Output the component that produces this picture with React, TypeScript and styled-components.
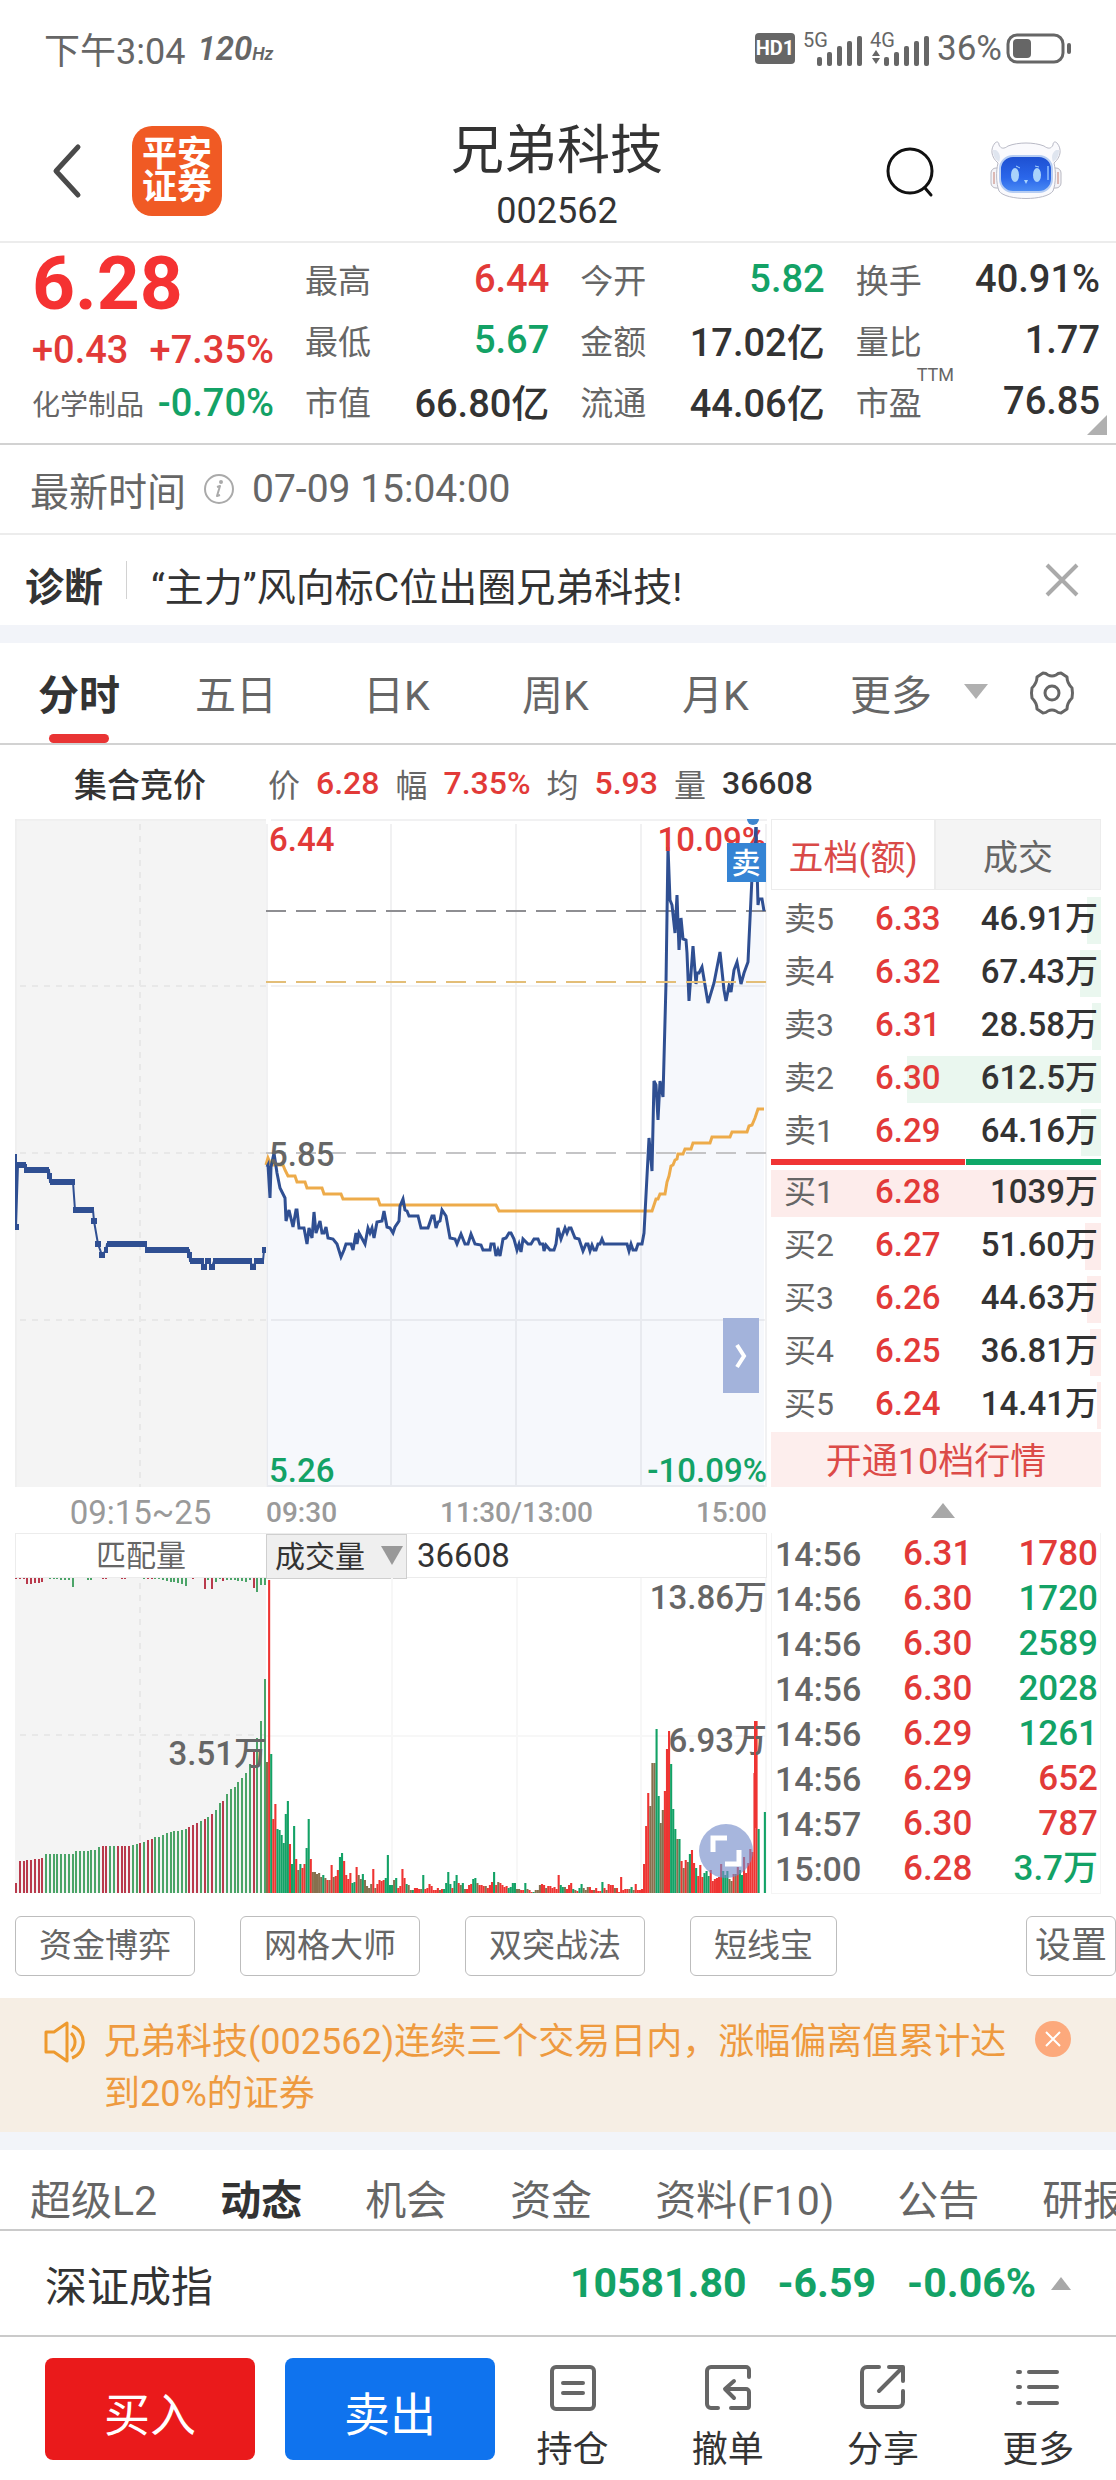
import React from "react";
import styled, { createGlobalStyle } from "styled-components";

const c = {
  red: "#e23a38",
  green: "#13a266",
  dark: "#333333",
  mid: "#666666",
  light: "#9a9a9a",
  line: "#d2d2d2",
  faint: "#ececec",
  band: "#f2f4f9",
  navy: "#2f4f92",
  amber: "#edab4a",
};

const GlobalStyle = createGlobalStyle`
  *, *::before, *::after { box-sizing: border-box; }
  body {
    margin: 0;
    background: #fff;
    color: ${c.dark};
    font-family: Roboto, "Noto Sans CJK SC", sans-serif;
  }
  button, select {
    font: inherit;
    color: inherit;
    border: 0;
    padding: 0;
    background: none;
  }
  a { color: inherit; text-decoration: none; }
  h1, p, dl, dd { margin: 0; }
  svg { display: block; overflow: visible; }
  svg text { font-family: Roboto, "Noto Sans CJK SC", sans-serif; }
`;

const Page = styled.div`
  display: flex;
  flex-direction: column;
  overflow: hidden;
`;

/* ---------- status bar ---------- */
const StatusBar = styled.div`
  display: flex;
  align-items: center;
  justify-content: space-between;
  height: 100px;
  padding: 0 45px 4px 44px;
  color: ${c.mid};
  font-size: 36px;
`;
const StatusGroup = styled.div`
  display: flex;
  align-items: center;
  gap: 8px;
`;
const Battery = styled.div`
  display: flex;
  align-items: center;
  gap: 4px;
  font-size: 35px;
`;
const Refresh = styled.span`
  margin-left: 4px;
  font-size: 33px;
  font-style: italic;
  font-weight: 600;
  small { font-size: 18px; }
`;
const HdBadge = styled.span`
  width: 40px;
  height: 31px;
  border-radius: 4px;
  background: ${c.mid};
  color: #fff;
  font-size: 20px;
  font-weight: 700;
  line-height: 31px;
  text-align: center;
`;

/* ---------- header ---------- */
const Header = styled.header`
  display: grid;
  grid-template-columns: 1fr auto 1fr;
  align-items: center;
  height: 143px;
  padding: 0 54px 0 52px;
  border-bottom: 2px solid ${c.faint};
`;
const HeaderSide = styled.div<{ $end?: boolean }>`
  display: flex;
  align-items: center;
  justify-content: ${(p) => (p.$end ? "flex-end" : "flex-start")};
  gap: ${(p) => (p.$end ? 55 : 51)}px;
`;
const Logo = styled.a`
  display: grid;
  place-content: center;
  width: 90px;
  height: 90px;
  border-radius: 20px;
  background: #f05a24;
  color: #fff;
  font-size: 35px;
  font-weight: 700;
  line-height: 33px;
  text-align: center;
`;
const Title = styled.h1`
  display: flex;
  flex-direction: column;
  align-items: center;
  padding-top: 13px;
  font-size: 53px;
  font-weight: 400;
  line-height: 68px;
  span { font-size: 36px; line-height: 52px; }
`;

/* ---------- quote summary ---------- */
const Quote = styled.section`
  position: relative;
  display: grid;
  grid-template-columns: 242px 1fr 1fr 1fr;
  column-gap: 31px;
  height: 202px;
  padding: 5px 16px 10px 32px;
  border-bottom: 2px solid ${c.line};
`;
const QuoteMain = styled.div`
  display: flex;
  flex-direction: column;
`;
const LastPrice = styled.strong`
  color: #f53232;
  font-size: 75px;
  line-height: 70px;
`;
const Change = styled.div<{ $color: string; $h: number }>`
  display: flex;
  align-items: center;
  justify-content: space-between;
  height: ${(p) => p.$h}px;
  color: ${(p) => p.$color};
  font-size: 38px;
  font-weight: 500;
  small { color: ${c.mid}; font-size: 28px; font-weight: 400; }
`;
const Stats = styled.dl`
  display: grid;
  grid-template-rows: repeat(3, 61px);
`;
const Stat = styled.div<{ $color?: string }>`
  display: flex;
  align-items: center;
  justify-content: space-between;
  dt { position: relative; color: ${c.mid}; font-size: 33px; }
  dd { color: ${(p) => p.$color ?? c.dark}; font-size: 38px; font-weight: 500; white-space: nowrap; }
  sup { position: absolute; top: -12px; left: 61px; font-size: 18px; line-height: 20px; }
`;
const Corner = styled.i`
  position: absolute;
  right: 9px;
  bottom: 8px;
  border-left: 20px solid transparent;
  border-bottom: 20px solid #b0b0b0;
`;

/* ---------- info rows ---------- */
const TimeRow = styled.section`
  display: flex;
  align-items: center;
  gap: 18px;
  height: 90px;
  padding: 0 32px 0 30px;
  border-bottom: 2px solid ${c.faint};
  color: ${c.mid};
  font-size: 39px;
`;
const Diagnosis = styled.section`
  display: flex;
  align-items: center;
  height: 90px;
  padding: 0 38px 0 25px;
  font-size: 39px;
  strong { padding: 8px 23px 0 0; }
  p { flex: 1; padding: 8px 0 0 24px; }
`;
const Rule = styled.i`
  width: 1px;
  height: 38px;
  background: ${c.line};
`;
const Band = styled.div`
  height: 18px;
  background: ${c.band};
`;

/* ---------- period tabs ---------- */
const Periods = styled.nav`
  display: grid;
  grid-template-columns: 157px 168px 159px 160px 168px 1fr auto;
  align-items: center;
  height: 102px;
  padding: 0 42px 0 38px;
  border-bottom: 2px solid ${c.line};
  color: ${c.mid};
  font-size: 41px;
`;
const Period = styled.button<{ $active?: boolean }>`
  position: relative;
  display: flex;
  align-items: center;
  gap: 32px;
  height: 100px;
  padding-bottom: 3px;
  color: ${(p) => (p.$active ? c.dark : c.mid)};
  font-weight: ${(p) => (p.$active ? 700 : 400)};
  &::after {
    content: "";
    display: ${(p) => (p.$active ? "block" : "none")};
    position: absolute;
    left: 11px;
    bottom: 0;
    width: 60px;
    height: 9px;
    border-radius: 5px;
    background: #e93434;
  }
`;
const Triangle = styled.i<{ $up?: boolean; $size: number }>`
  border: solid transparent;
  border-width: ${(p) => (p.$up ? `0 ${p.$size}px ${p.$size + 3}px` : `${p.$size + 3}px ${p.$size}px 0`)};
  border-top-color: ${(p) => (p.$up ? "transparent" : "#b0b0b0")};
  border-bottom-color: ${(p) => (p.$up ? "#a8a8a8" : "transparent")};
`;
const Readout = styled.div`
  display: flex;
  align-items: center;
  gap: 16px;
  height: 74px;
  padding: 2px 74px 0;
  color: ${c.mid};
  font-size: 32px;
  strong { margin-right: 46px; color: ${c.dark}; font-size: 33px; font-weight: 500; }
  b { color: ${c.red}; font-weight: 500; }
  b:last-child { color: ${c.dark}; }
`;

/* ---------- market area ---------- */
const Market = styled.main`
  display: grid;
  grid-template-columns: minmax(0, 1fr) 330px;
  column-gap: 4px;
  padding: 0 15px;
`;
const ChartBox = styled.div`
  position: relative;
  svg { width: 100%; height: auto; }
`;
const NextButton = styled.button`
  position: absolute;
  right: 8px;
  bottom: 94px;
  display: grid;
  place-items: center;
  width: 36px;
  height: 75px;
  background: #a3b3db;
  && svg { width: 12px; height: 24px; }
`;
const ExpandButton = styled.button`
  position: absolute;
  right: 14px;
  bottom: 15px;
  display: grid;
  place-items: center;
  width: 54px;
  height: 54px;
  border-radius: 50%;
  background: rgba(116, 139, 201, 0.63);
  && svg { width: 30px; height: 30px; }
`;
const Axis = styled.div`
  display: grid;
  grid-template-columns: 251px 1fr 1fr 1fr;
  align-items: center;
  height: 46px;
  padding-top: 4px;
  color: ${c.light};
  font-size: 28px;
  font-weight: 500;
  span:first-child { font-size: 33px; font-weight: 400; text-align: center; }
  span:nth-child(3) { text-align: center; }
  span:last-child { text-align: right; }
`;
const Book = styled.section`
  display: flex;
  flex-direction: column;
`;
const BookTabs = styled.div`
  display: grid;
  grid-template-columns: 164px 1fr;
  height: 71px;
  margin-bottom: 4px;
`;
const BookTab = styled.button<{ $active?: boolean }>`
  border: 1px solid ${c.faint};
  background: ${(p) => (p.$active ? "#fff" : "#f4f4f4")};
  color: ${(p) => (p.$active ? "#d94a48" : c.mid)};
  font-size: 35px;
`;
const Table = styled.table`
  display: block;
  tbody { display: block; }
`;
const Level = styled.tr<{ $width: string; $tint: string }>`
  display: grid;
  grid-template-columns: 91px 72px 1fr;
  align-items: center;
  height: 53px;
  padding: 0 3px 3px 13px;
  background: linear-gradient(${(p) => p.$tint}, ${(p) => p.$tint}) right center / ${(p) => p.$width} 47px no-repeat;
  font-size: 33px;
  font-weight: 500;
  th, td { padding: 0; line-height: 40px; white-space: nowrap; }
  th { color: ${c.mid}; font-size: 32px; font-weight: 400; text-align: left; }
  td { color: ${c.red}; }
  td:last-child { color: ${c.dark}; text-align: right; }
`;
const Ratio = styled.div`
  display: grid;
  grid-template-columns: 194fr 135fr;
  gap: 1px;
  height: 6px;
  margin-bottom: 2px;
  i:first-child { background: #f03434; }
  i:last-child { background: #0fa868; }
`;
const OpenDepth = styled.button`
  flex: 1;
  padding-top: 4px;
  background: #fdeeed;
  color: #dc4b48;
  font-size: 36px;
  line-height: 50px;
`;
const Collapse = styled.button`
  display: grid;
  place-items: center;
  padding-left: 14px;
`;
const VolumeHead = styled.div`
  display: grid;
  grid-template-columns: 250px 141px 1fr;
  height: 45px;
  border: 1px solid ${c.faint};
  color: ${c.mid};
  font-size: 30px;
  line-height: 43px;
  text-align: center;
  output { padding-left: 10px; color: ${c.dark}; font-size: 33px; text-align: left; }
`;
const Picker = styled.label`
  position: relative;
  border: 1px solid #cfcfcf;
  background: #efefef;
  color: ${c.dark};
  select { appearance: none; width: 100%; height: 100%; padding-left: 8px; line-height: 41px; }
  i { position: absolute; top: 11px; right: 3px; border: 11px solid transparent; border-top: 19px solid #999; border-bottom: 0; }
`;
const TradeBox = styled.section`
  border: 1px solid #f4f4f4;
  border-top: 0;
`;
const Trade = styled.tr<{ $color: string }>`
  display: grid;
  grid-template-columns: 128px 76px 1fr;
  align-items: center;
  height: 45px;
  padding: 0 2px 3px 3px;
  font-size: 35px;
  font-weight: 500;
  td { padding: 0; line-height: 42px; color: ${c.red}; }
  td:first-child { color: ${c.mid}; font-size: 34px; }
  td:last-child { color: ${(p) => p.$color}; text-align: right; }
`;

/* ---------- tools, notice, tabs ---------- */
const Tools = styled.div`
  display: flex;
  gap: 45px;
  padding: 22px 0 22px 15px;
`;
const Tool = styled.button<{ $last?: boolean }>`
  height: 60px;
  padding: 0 ${(p) => (p.$last ? 8 : 23)}px;
  margin-left: ${(p) => (p.$last ? "auto" : "0")};
  border: 1px solid #bdbdbd;
  border-radius: 6px;
  color: ${c.mid};
  font-size: ${(p) => (p.$last ? 36 : 33)}px;
  line-height: 56px;
`;
const Notice = styled.section`
  display: flex;
  align-items: flex-start;
  height: 134px;
  padding: 18px 45px 0 44px;
  background: #f6eee4;
  color: #ee9a3f;
  font-size: 36px;
  line-height: 52px;
  p { flex: 1; padding: 0 24px 0 16px; }
`;
const IconPad = styled.span`
  padding-top: 5px;
`;
const CloseDot = styled.button`
  display: grid;
  place-items: center;
  width: 36px;
  height: 36px;
  margin-top: 5px;
  border-radius: 50%;
  background: #fca97c;
`;
const Sections = styled.nav`
  display: flex;
  align-items: center;
  gap: 63px;
  height: 81px;
  padding: 22px 0 0 30px;
  border-bottom: 2px solid #cacaca;
  white-space: nowrap;
  overflow: hidden;
`;
const SectionLink = styled.a<{ $active?: boolean }>`
  color: ${(p) => (p.$active ? c.dark : c.mid)};
  font-size: 41px;
  font-weight: ${(p) => (p.$active ? 700 : 400)};
  line-height: 56px;
`;
const IndexRow = styled.section`
  display: flex;
  align-items: center;
  gap: 31px;
  height: 106px;
  padding: 0 45px;
  border-bottom: 2px solid #cacaca;
  font-size: 42px;
  span { flex: 1; }
  b { color: ${c.green}; font-size: 41px; }
  b:last-of-type { margin-right: -16px; }
`;
const ActionBar = styled.footer`
  display: grid;
  grid-template-columns: 210px 210px 1fr;
  column-gap: 30px;
  height: 144px;
  padding: 21px 0 0 45px;
`;
const TradeButton = styled.button<{ $bg: string }>`
  height: 102px;
  padding-top: 4px;
  border-radius: 8px;
  background: ${(p) => p.$bg};
  color: #fff;
  font-size: 46px;
`;
const Actions = styled.div`
  display: grid;
  grid-template-columns: repeat(4, 1fr);
  margin-left: -30px;
`;
const Action = styled.button`
  display: flex;
  flex-direction: column;
  align-items: center;
  gap: 12px;
  padding-top: 7px;
  font-size: 36px;
  line-height: 54px;
`;
const PlainButton = styled.button`
  display: grid;
  place-items: center;
`;

/* ---------- data ---------- */
const avgLine =
  "251,346 253,339 256,346 268,346 270,351 273,357 280,357 282,363 290,363 292,369 307,369 309,375 326,375 328,380 363,380 365,386 481,386 484,392 637,392 641,380 643,380 645,375 650,375 652,363 654,357 656,347 658,346 660,341 662,340 663,335 668,335 670,330 676,330 678,324 695,324 697,318 715,318 717,313 732,313 734,307 737,306 740,299 743,290 749,290";
const priceLine =
  "252,348 253,346 255,379 256,348 259,334 262,354 265,369 270,379 271,402 274,391 278,408 281,391 282,391 284,409 289,409 292,425 294,409 297,419 299,393 301,414 305,402 307,414 309,414 311,408 313,419 318,420 322,425 326,438 329,431 331,425 336,425 338,431 341,414 342,425 344,414 350,425 353,409 355,414 357,409 359,419 362,403 367,402 369,392 372,408 375,409 378,414 380,408 384,402 385,387 388,380 390,391 392,392 394,397 403,397 406,409 413,409 417,397 419,397 421,409 423,403 425,402 427,391 431,397 435,419 440,420 442,425 446,415 450,425 453,425 456,415 460,425 466,426 468,431 475,431 476,425 479,425 481,437 483,431 485,437 488,420 491,419 494,414 496,414 499,420 502,431 504,425 506,433 508,420 513,425 516,425 519,420 523,420 525,425 528,425 529,432 531,426 535,431 539,431 541,425 543,409 546,420 550,409 552,414 554,409 556,409 560,419 564,420 568,432 571,425 573,425 575,432 577,426 579,431 581,431 583,425 585,425 587,420 589,425 612,425 614,432 616,425 618,431 621,431 623,425 627,425 629,414 632,357 634,319 637,352 639,262 641,266 643,301 645,262 648,278 651,164 653,28 655,81 657,86 660,114 662,76 664,131 666,99 668,120 671,121 672,134 674,182 678,127 681,165 682,154 684,154 687,148 693,184 699,164 705,133 709,171 711,182 714,167 716,173 719,151 722,143 726,165 729,154 733,143 734,121 737,58 741,8 743,86 744,80 747,80 749,92";
const auctionLine =
  "1,335 1,408 3,346 11,346 11,351 34,351 35,363 58,363 60,391 78,391 79,402 83,425 87,436 91,431 92,425 131,425 131,431 174,431 175,442 186,442 189,448 193,442 197,448 199,442 235,442 238,448 241,442 248,442 249,431";
/* [x start, x end, y] of each plateau in the call auction */
const auctionSteps = [
  [2, 11, 346], [9, 34, 351], [32, 37, 357], [35, 60, 363], [58, 79, 391], [76, 82, 402], [80, 86, 425],
  [84, 90, 436], [89, 93, 431], [92, 132, 425], [130, 174, 431], [172, 177, 436], [175, 189, 442], [186, 192, 448],
  [190, 196, 442], [194, 200, 448], [198, 237, 442], [235, 241, 448], [239, 249, 442], [247, 251, 431], [0, 4, 408],
];

const matched = [
  10, 32, 32, 33, 33, 34, 34, 35, 39, 39, 39, 39, 39, 39, 39, 39, 42, 42, 42, 42, 43, 43, 46, 47, 47, 47, 47, 47, 47,
  47, 47, 48, 49, 50, 51, 53, 54, 56, 56, 58, 60, 61, 62, 62, 63, 64, 66, 68, 70, 72, 74, 76, 79, 83, 90, 92, 99, 104,
  106, 111, 115, 120, 129, 141, 155, 172, 214,
];
const unmatched = [
  1, 1, 1, 6, 6, 5, 5, 4, 0, 1, 1, 1, 2, 2, 2, 9, 0, 0, 0, 2, 2, 0, 0, 1, 1, 0, 0, 0, 1, 1, 0, 0, 0, 0, 1, 1, 1, 1, 1,
  2, 3, 4, 4, 5, 6, 8, 0, 1, 0, 0, 11, 2, 11, 4, 1, 3, 2, 2, 2, 3, 3, 4, 2, 10, 14, 7, 7,
];
const auctionReds = new Set([0, 1, 2, 3, 4, 5, 6, 7, 23, 24, 27, 28, 29, 30, 33, 35, 36, 46, 47, 48, 50, 52, 55, 63]);

/* one entry per minute: height plus r (up), g (down) or m (mixed) */
const minutes = (
  "131m 313r 139g 74r 89r 64g 63g 58g 50g 79g 92g 49r 29g 67g 34r 23m 29g 25r 29r 45g 74g 34r 21m 21m 19m 20m 16m 18g 15m 13r " +
  "13m 28r 16m 17r 23r 36g 40g 32r 18r 14r 20r 10g 11g 26r 18m 14m 19g 13m 7m 5m 9m 24r 5m 9r 13r 12r 13r 15g 38g 8g " +
  "8g 13m 15g 5r 7r 24r 15r 9g 8m 3m 3g 5r 5r 4r 4m 18g 4r 5r 9r 7r 3r 3r 5r 3m 4r 4g 10g 21g 9g 5r " +
  "12g 18g 10r 8m 10g 4m 4r 8r 9r 14g 15g 10m 8r 8r 7r 7m 5r 8r 11r 21g 8r 11m 10r 8r 6r 7r 5g 6g 10g 10g " +
  "4m 4m 3r 3r 10g 4m 3r 1r 1g 3m 3m 8m 9r 8r 5m 7r 7r 5r 6r 4r 18r 8g 6g 6m 4r 8r 10r 4g 3m 2r " +
  "5g 9g 5m 3m 6m 6r 3r 3m 5r 2r 2r 11g 5r 3m 9r 8r 8r 5m 5r 1r 16r 3r 4r 4r 4m 6g 3m 9r 3r 3r " +
  "4r 29r 67r 100r 87m 130m 130m 164g 97g 70m 83m 102r 144r 162r 129g 84g 64g 54m 54g 32r 25m 33r 31m 39g 43r 30r 25g 17r 28r 16r " +
  "20g 22g 17g 23r 12r 14r 15r 16r 29r 22g 18g 22g 14m 12m 19r 19m 26r 23g 18g 36r 20r 30r 44r 41r 120r 172r 64g 0g 0g 81g"
)
  .split(" ")
  .map((m) => ({ h: parseInt(m, 10), tone: m.slice(-1) as "r" | "g" | "m" }));
const tones = { r: "#ee3432", g: "#13a266", m: "#86704e" };

const sells = [
  ["卖5", "6.33", "46.91万", "14px"],
  ["卖4", "6.32", "67.43万", "21px"],
  ["卖3", "6.31", "28.58万", "9px"],
  ["卖2", "6.30", "612.5万", "194px"],
  ["卖1", "6.29", "64.16万", "20px"],
];
const buys = [
  ["买1", "6.28", "1039万", "100%"],
  ["买2", "6.27", "51.60万", "16px"],
  ["买3", "6.26", "44.63万", "14px"],
  ["买4", "6.25", "36.81万", "11px"],
  ["买5", "6.24", "14.41万", "4px"],
];
const trades: [string, string, string, boolean][] = [
  ["14:56", "6.31", "1780", true],
  ["14:56", "6.30", "1720", false],
  ["14:56", "6.30", "2589", false],
  ["14:56", "6.30", "2028", false],
  ["14:56", "6.29", "1261", false],
  ["14:56", "6.29", "652", true],
  ["14:57", "6.30", "787", true],
  ["15:00", "6.28", "3.7万", false],
];
const stats: [string, string, string?][][] = [
  [["最高", "6.44", c.red], ["最低", "5.67", c.green], ["市值", "66.80亿"]],
  [["今开", "5.82", c.green], ["金额", "17.02亿"], ["流通", "44.06亿"]],
  [["换手", "40.91%"], ["量比", "1.77"], ["市盈", "76.85"]],
];

/* ---------- drawings ---------- */
const Signal = ({ label, arrows }: { label: string; arrows?: boolean }) => (
  <svg width="59" height="36" viewBox="0 0 59 36" fill={c.mid}>
    <text x="0" y="17" fontSize="20">{label}</text>
    {arrows && <path d="M2 26l4-6 4 6zM2 28l4 6 4-6z" />}
    {[9, 14, 20, 25, 30].map((h, i) => (
      <rect key={h} x={14 + i * 10} y={36 - h} width="5" height={h} rx="2" />
    ))}
  </svg>
);

const Robot = () => (
  <svg width="72" height="60" viewBox="0 0 72 60">
    <defs>
      <linearGradient id="visor" x1="0" y1="0" x2="0" y2="1">
        <stop offset="0" stopColor="#1d4fd0" />
        <stop offset="0.6" stopColor="#2a66ea" />
        <stop offset="1" stopColor="#4b8cf4" />
      </linearGradient>
    </defs>
    <rect x="1" y="27" width="14" height="20" rx="5" fill="#f4f4f8" stroke="#b8b8c2" />
    <rect x="57" y="27" width="14" height="20" rx="5" fill="#f4f4f8" stroke="#b8b8c2" />
    <path d="M4 31v12M68 31v12" stroke="#dcb9b4" strokeWidth="2" />
    <path
      d="M8 22C1 16 0 8 5 2c2-2 4-1 4 2 2 4 5 4 9 1 10-4 26-4 36 0 4 3 7 3 9-1 0-3 2-4 4-2 5 6 4 14-3 20 2 8 2 20-1 28-7 10-47 10-54 0-3-8-3-20-1-28z"
      fill="#fafafd"
      stroke="#b9bac6"
    />
    <path d="M3 9c0 6 2 9 6 12 2-5 1-9-3-12zM69 9c0 6-2 9-6 12-2-5-1-9 3-12z" fill="#dfe5ef" />
    <rect x="10" y="15" width="52" height="36" rx="13" fill="url(#visor)" stroke="#b6cdf3" strokeWidth="2" />
    <ellipse cx="25" cy="34" rx="4" ry="7" fill="#a9d3fb" />
    <ellipse cx="47" cy="34" rx="4" ry="7" fill="#a9d3fb" />
    <path d="M26 25l4 2M45 25l4 1" stroke="#a9d3fb" strokeWidth="1" />
    <path d="M34 39h4l-2 4z" fill="#a9d3fb" />
    <path d="M58 25v14" stroke="#74a6f7" strokeWidth="2" />
  </svg>
);

const PriceChart = () => (
  <svg viewBox="0 0 752 668" role="img" aria-label="分时走势">
    <rect width="251" height="668" fill="#f4f4f4" />
    <path d="M1 0V668M0 1H251" stroke="#ebebeb" fill="none" />
    <path d="M125 5V668M5 167H251M5 334H251M5 501H251" stroke="#e8e8e8" strokeWidth="2" strokeDasharray="6 6" />
    <path d="M256 1H752M252 667H752M252 5V668M376 5V668M501 5V668M626 5V668M751 5V668M256 167H752M256 501H752" stroke="#f1f1f2" strokeWidth="2" />
    <polygon points={`252,668 ${priceLine} 749,668`} fill="#4a74c8" fillOpacity="0.05" />
    <path d="M251 92H751" stroke="#8e8e92" strokeWidth="2" strokeDasharray="20 10" />
    <path d="M251 334H751" stroke="#c4c4c6" strokeWidth="2" strokeDasharray="20 10" />
    <polyline points={avgLine} fill="none" stroke={c.amber} strokeWidth="3" />
    <polyline points={priceLine} fill="none" stroke={c.navy} strokeWidth="3" />
    <path d="M251 163H751" stroke="#e3be78" strokeWidth="2" strokeDasharray="20 10" />
    <polyline points={auctionLine} fill="none" stroke={c.navy} strokeWidth="2" />
    <g stroke={c.navy} strokeWidth="6">
      {auctionSteps.map(([a, b, y]) => (
        <path key={`${a}-${y}`} d={`M${a} ${y}H${b}`} />
      ))}
    </g>
    <g fontSize="33" fontWeight="500">
      <text x="254" y="32" fill={c.red}>6.44</text>
      <text x="254" y="347" fill={c.mid}>5.85</text>
      <text x="254" y="663" fill={c.green}>5.26</text>
      <text x="751" y="32" fill={c.red} textAnchor="end">10.09%</text>
      <text x="752" y="663" fill={c.green} textAnchor="end">-10.09%</text>
    </g>
    <path d="M741 30V8" stroke={c.navy} strokeWidth="3" />
    <path d="M732 0a6 6 0 0 0 12 0z" fill="#3d86cf" />
    <rect x="712" y="24" width="39" height="39" fill="#3584d4" />
    <text x="731" y="55" fontSize="29" fontWeight="500" fill="#fff" textAnchor="middle">卖</text>
  </svg>
);

const VolumeChart = () => (
  <svg viewBox="0 0 752 315" role="img" aria-label="成交量">
    <rect width="251" height="315" fill="#f4f4f4" />
    <path d="M125 5V315M5 157H251" stroke="#e8e8e8" strokeWidth="2" strokeDasharray="6 6" />
    <path d="M377 0V315M502 0V315M626 0V315M751 0V315M251 158H752" stroke="#f7f7f7" strokeWidth="2" />
    {matched.map((h, i) => {
      const fill = auctionReds.has(i) ? "#b93a4c" : "#4ba468";
      const x = Math.round(i * 3.77);
      return (
        <g key={i} fill={fill}>
          <rect x={x} y={315 - h} width="2" height={h} />
          <rect x={x} y="0" width="2" height={unmatched[i]} />
        </g>
      );
    })}
    {minutes.map((m, i) => (
      <rect key={i} x={251 + i * 2.083} y={315 - m.h} width="2.1" height={m.h} fill={tones[m.tone]} />
    ))}
    <g fontSize="33" fontWeight="500" fill={c.mid} textAnchor="end">
      <text x="252" y="187">3.51万</text>
      <text x="752" y="31">13.86万</text>
      <text x="752" y="174">6.93万</text>
    </g>
    <path d="M740 143V250" stroke={tones.r} strokeWidth="2" />
  </svg>
);

const LineIcon = ({ d }: { d: string }) => (
  <svg width="46" height="46" viewBox="0 0 46 46" fill="none" stroke={c.mid} strokeWidth="4" strokeLinecap="round" strokeLinejoin="round">
    <path d={d} />
  </svg>
);

const actions = [
  ["持仓", "M6 2H40a4 4 0 0 1 4 4V40a4 4 0 0 1-4 4H6a4 4 0 0 1-4-4V6a4 4 0 0 1 4-4zM13 18H33M13 28H33"],
  ["撤单", "M44 12V5a3 3 0 0 0-3-3H6a4 4 0 0 0-4 4V39a4 4 0 0 0 4 4H13M26 43H42a2 2 0 0 0 2-2V27a3 3 0 0 0-3-3H21M29 16L20 24L29 33"],
  ["分享", "M19 2H7a5 5 0 0 0-5 5V37a5 5 0 0 0 5 5H38a5 5 0 0 0 5-5V26M29 2H43V16M42 3L19 26"],
  ["更多", "M3 7H5M3 22H5M3 38H5M14 7H42M14 22H42M14 38H42"],
];

const Levels = ({ rows, tint }: { rows: string[][]; tint: string }) => (
  <Table>
    <tbody>
      {rows.map(([name, price, amount, width]) => (
        <Level key={name} $width={width} $tint={tint}>
          <th scope="row">{name}</th>
          <td>{price}</td>
          <td>{amount}</td>
        </Level>
      ))}
    </tbody>
  </Table>
);

export default function App() {
  return (
    <Page>
      <GlobalStyle />
      <StatusBar>
        <StatusGroup>
          <span>下午3:04</span>
          <Refresh>120<small>Hz</small></Refresh>
        </StatusGroup>
        <StatusGroup>
          <HdBadge>HD1</HdBadge>
          <Signal label="5G" />
          <Signal label="4G" arrows />
          <Battery>
            <span>36%</span>
            <svg width="65" height="31" viewBox="0 0 65 31" fill="none">
              <rect x="2" y="2" width="55" height="27" rx="9" stroke={c.mid} strokeWidth="3" />
              <rect x="7" y="6" width="18" height="19" rx="4" fill={c.mid} />
              <rect x="61" y="10" width="4" height="11" rx="2" fill={c.mid} />
            </svg>
          </Battery>
        </StatusGroup>
      </StatusBar>

      <Header>
        <HeaderSide>
          <PlainButton aria-label="返回">
            <svg width="29" height="54" viewBox="0 0 29 54" fill="none" stroke="#4a4a4a" strokeWidth="5" strokeLinecap="round" strokeLinejoin="round">
              <path d="M26 3L4 27L26 51" />
            </svg>
          </PlainButton>
          <Logo href="#home"><span>平安</span><span>证券</span></Logo>
        </HeaderSide>
        <Title>兄弟科技<span>002562</span></Title>
        <HeaderSide $end>
          <PlainButton aria-label="搜索">
            <svg width="50" height="52" viewBox="0 0 50 52" fill="none" stroke="#111" strokeWidth="3" strokeLinecap="round">
              <circle cx="25" cy="26" r="22" />
              <path d="M40 43l6 7" />
            </svg>
          </PlainButton>
          <PlainButton aria-label="智能助手"><Robot /></PlainButton>
        </HeaderSide>
      </Header>

      <Quote>
        <QuoteMain>
          <LastPrice>6.28</LastPrice>
          <Change $color={c.red} $h={64}><span>+0.43</span><span>+7.35%</span></Change>
          <Change $color={c.green} $h={42}><small>化学制品</small><span>-0.70%</span></Change>
        </QuoteMain>
        {stats.map((column, i) => (
          <Stats key={i}>
            {column.map(([name, value, color]) => (
              <Stat key={name} $color={color}>
                <dt>{name}{name === "市盈" && <sup>TTM</sup>}</dt>
                <dd>{value}</dd>
              </Stat>
            ))}
          </Stats>
        ))}
        <Corner />
      </Quote>

      <TimeRow>
        <span>最新时间</span>
        <svg width="30" height="30" viewBox="0 0 30 30" fill="none" stroke="#aaa" strokeWidth="2">
          <circle cx="15" cy="15" r="14" />
          <path d="M13 13l3-1-3 10 3-1" strokeLinejoin="round" />
          <circle cx="17" cy="8" r="1" />
        </svg>
        <time>07-09 15:04:00</time>
      </TimeRow>
      <Diagnosis>
        <strong>诊断</strong>
        <Rule />
        <p>“主力”风向标C位出圈兄弟科技!</p>
        <PlainButton aria-label="关闭">
          <svg width="32" height="32" viewBox="0 0 32 32" stroke="#aaa" strokeWidth="4">
            <path d="M1 1L31 31M31 1L1 31" />
          </svg>
        </PlainButton>
      </Diagnosis>
      <Band />

      <Periods>
        <Period $active>分时</Period>
        <Period>五日</Period>
        <Period>日K</Period>
        <Period>周K</Period>
        <Period>月K</Period>
        <Period>更多<Triangle $size={12} /></Period>
        <PlainButton aria-label="图表设置">
          <svg width="44" height="44" viewBox="0 0 44 44" fill="none" stroke={c.mid} strokeWidth="3" strokeLinejoin="round">
            <path d="M13 2Q16 2 18 4Q22 6 26 4Q28 2 31 2L37 6Q37 12 42 17Q43 22 42 27Q37 32 37 38L31 42Q28 42 26 40Q22 38 18 40Q16 42 13 42L7 38Q7 32 2 27Q1 22 2 17Q7 12 7 6Z" />
            <circle cx="22" cy="22" r="7" />
          </svg>
        </PlainButton>
      </Periods>
      <Readout>
        <strong>集合竞价</strong>
        <span>价</span><b>6.28</b>
        <span>幅</span><b>7.35%</b>
        <span>均</span><b>5.93</b>
        <span>量</span><b>36608</b>
      </Readout>

      <Market>
        <ChartBox>
          <PriceChart />
          <NextButton aria-label="展开">
            <svg viewBox="0 0 12 24" fill="none" stroke="#fff" strokeWidth="4"><path d="M2 1L9 12L2 23" /></svg>
          </NextButton>
        </ChartBox>
        <Book>
          <BookTabs>
            <BookTab $active>五档(额)</BookTab>
            <BookTab>成交</BookTab>
          </BookTabs>
          <Levels rows={sells} tint="#eaf7ef" />
          <Ratio><i /><i /></Ratio>
          <Levels rows={buys} tint="#fdeceb" />
          <OpenDepth>开通10档行情</OpenDepth>
        </Book>

        <Axis>
          <span>09:15~25</span>
          <span>09:30</span>
          <span>11:30/13:00</span>
          <span>15:00</span>
        </Axis>
        <Collapse aria-label="收起"><Triangle $up $size={12} /></Collapse>

        <div>
          <VolumeHead>
            <span>匹配量</span>
            <Picker>
              <select aria-label="指标"><option>成交量</option></select>
              <i />
            </Picker>
            <output>36608</output>
          </VolumeHead>
          <ChartBox>
            <VolumeChart />
            <ExpandButton aria-label="全屏">
              <svg viewBox="0 0 30 30" fill="none" stroke="#fff" strokeWidth="5"><path d="M2 16V2H16M28 14V28H14" /></svg>
            </ExpandButton>
          </ChartBox>
        </div>
        <TradeBox>
          <Table>
            <tbody>
              {trades.map(([time, price, volume, up], i) => (
                <Trade key={i} $color={up ? c.red : c.green}>
                  <td>{time}</td>
                  <td>{price}</td>
                  <td>{volume}</td>
                </Trade>
              ))}
            </tbody>
          </Table>
        </TradeBox>
      </Market>

      <Tools>
        <Tool>资金博弈</Tool>
        <Tool>网格大师</Tool>
        <Tool>双突战法</Tool>
        <Tool>短线宝</Tool>
        <Tool $last>设置</Tool>
      </Tools>

      <Notice>
        <IconPad>
          <svg width="44" height="42" viewBox="0 0 44 42" fill="none" stroke="#ee9a2e" strokeWidth="3" strokeLinejoin="round">
            <path d="M2 11H10L23 2V40L10 31H2Z" />
            <path d="M27 12a12 12 0 0 1 0 18M28 5a17 17 0 0 1 0 32" />
          </svg>
        </IconPad>
        <p>兄弟科技(002562)连续三个交易日内，涨幅偏离值累计达到20%的证券</p>
        <CloseDot aria-label="关闭提示">
          <svg width="16" height="16" viewBox="0 0 16 16" stroke="#fff" strokeWidth="2"><path d="M1 1L15 15M15 1L1 15" /></svg>
        </CloseDot>
      </Notice>
      <Band />

      <Sections>
        {["超级L2", "动态", "机会", "资金", "资料(F10)", "公告", "研报"].map((name) => (
          <SectionLink key={name} href="#section" $active={name === "动态"}>{name}</SectionLink>
        ))}
      </Sections>
      <IndexRow>
        <span>深证成指</span>
        <b>10581.80</b>
        <b>-6.59</b>
        <b>-0.06%</b>
        <Triangle $up $size={10} />
      </IndexRow>
      <ActionBar>
        <TradeButton $bg="#ea1a1b">买入</TradeButton>
        <TradeButton $bg="#0f73ee">卖出</TradeButton>
        <Actions>
          {actions.map(([name, d]) => (
            <Action key={name}><LineIcon d={d} />{name}</Action>
          ))}
        </Actions>
      </ActionBar>
    </Page>
  );
}
